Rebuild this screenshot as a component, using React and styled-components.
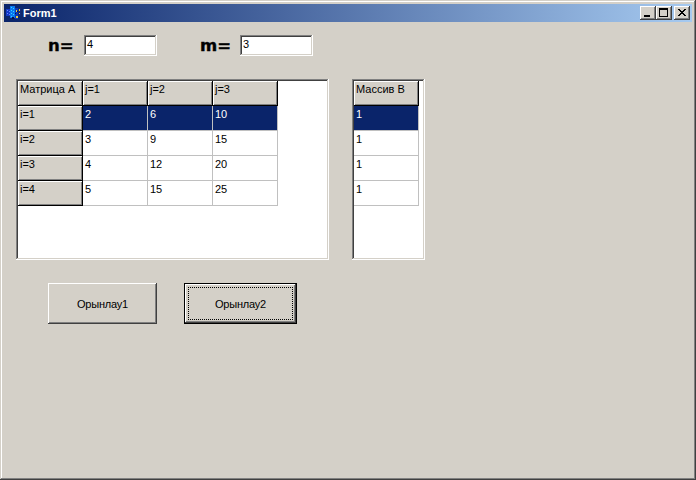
import React from "react";
import styled, { createGlobalStyle } from "styled-components";

const Global = createGlobalStyle`
  html, body { margin: 0; padding: 0; background: #d4d0c8; }
  * { box-sizing: border-box; }
`;

const Win = styled.div`
  width: 696px;
  height: 480px;
  padding: 4px;
  background: #d4d0c8;
  font-family: "Liberation Sans", Arial, sans-serif;
  font-size: 11px;
  color: #000;
  box-shadow: inset -1px -1px 0 #404040, inset 1px 1px 0 #d4d0c8,
    inset -2px -2px 0 #808080, inset 2px 2px 0 #fff;
  overflow: hidden;
`;

const TitleBar = styled.div`
  height: 18px;
  display: flex;
  align-items: center;
  padding: 0 2px 0 2px;
  background: linear-gradient(90deg, #0a246a, #a6caf0);
`;

const TitleIcon = styled.svg`
  width: 16px;
  height: 16px;
  flex: none;
  margin-right: 1px;
  shape-rendering: crispEdges;
`;

const TitleText = styled.span`
  flex: 1;
  color: #fff;
  font-weight: 700;
  font-size: 11px;
  font-family: "Liberation Sans", Arial, sans-serif;
`;

const CapBtn = styled.div`
  width: 16px;
  height: 14px;
  margin-left: ${(p) => p.$gap || 0}px;
  background: #d4d0c8;
  box-shadow: inset -1px -1px 0 #404040, inset 1px 1px 0 #fff,
    inset -2px -2px 0 #808080;
  display: flex;
  align-items: center;
  justify-content: center;
`;

const CapGlyph = styled.svg`
  width: 16px;
  height: 14px;
  shape-rendering: crispEdges;
`;

const Fields = styled.div`
  display: flex;
  align-items: center;
  height: 21px;
  margin-top: 13px;
  padding-left: 44px;
`;

const Label = styled.span`
  font-family: "DejaVu Sans", Verdana, sans-serif;
  font-weight: 700;
  font-size: 16.5px;
  line-height: 21px;
  -webkit-text-stroke: 0.4px #000;
  width: ${(p) => p.$w}px;
  margin-left: ${(p) => p.$ml || 0}px;
`;

const Edit = styled.div`
  width: 73px;
  height: 21px;
  padding: 3px 0 0 3px;
  background: #fff;
  line-height: 13px;
  box-shadow: inset -1px -1px 0 #fff, inset 1px 1px 0 #808080,
    inset -2px -2px 0 #d4d0c8, inset 2px 2px 0 #404040;
`;

const Grids = styled.div`
  display: flex;
  margin-top: 23px;
  margin-left: 12px;
  gap: 23px;
`;

const GridBox = styled.div`
  width: ${(p) => p.$w}px;
  height: 181px;
  padding: 2px;
  background: #fff;
  box-shadow: inset -1px -1px 0 #fff, inset 1px 1px 0 #808080,
    inset -2px -2px 0 #d4d0c8, inset 2px 2px 0 #404040;
`;

const Row = styled.div`
  display: flex;
  height: 25px;
`;

const Fixed = styled.div`
  width: 65px;
  height: 25px;
  padding: 2px 0 0 2px;
  line-height: 13px;
  background: #d4d0c8;
  white-space: nowrap;
  box-shadow: inset -1px -1px 0 #000, inset 1px 1px 0 #fff,
    inset -2px -2px 0 #808080;
`;

const Cell = styled.div`
  width: 65px;
  height: 25px;
  padding: 2px 0 0 2px;
  line-height: 13px;
  background: ${(p) => (p.$sel ? "#0a246a" : "#fff")};
  color: ${(p) => (p.$sel ? "#fff" : "#000")};
  border-right: 1px solid #c0c0c0;
  border-bottom: 1px solid #c0c0c0;
`;

const Buttons = styled.div`
  display: flex;
  margin-top: 23px;
  margin-left: 44px;
  gap: 27px;
`;

const Btn = styled.div`
  width: ${(p) => p.$w}px;
  height: 41px;
  background: #d4d0c8;
  display: flex;
  align-items: center;
  justify-content: center;
  letter-spacing: -0.2px;
  box-shadow: inset -1px -1px 0 #404040, inset 1px 1px 0 #fff,
    inset -2px -2px 0 #808080;
`;

const DefaultBtn = styled(Btn)`
  position: relative;
  box-shadow: inset 0 0 0 1px #000, inset -2px -2px 0 #404040,
    inset 2px 2px 0 #fff, inset -3px -3px 0 #808080;
  &::after {
    content: "";
    position: absolute;
    inset: 4px;
    border: 1px dotted #000;
  }
`;

const Logo = () => (
  <TitleIcon viewBox="0 0 16 16">
    <rect x="0" y="4" width="4" height="7" fill="#1238c8" />
    <rect x="4" y="1" width="5" height="12" fill="#0a78f0" />
    <rect x="9" y="3" width="3" height="11" fill="#0c3ab8" />
    <rect x="12" y="3" width="3" height="8" fill="#142a78" />
    <path d="M1 5h1v1H1zM1 8h1v1H1zM3 6h1v1H3zM3 9h1v1H3z" fill="#6a88ff" />
    <path d="M5 2h1v1H5zM7 3h1v1H7zM5 5h1v1H5zM7 6h1v1H7zM5 8h1v1H5zM7 9h1v1H7zM5 11h1v1H5z" fill="#38d8ff" />
    <path d="M10 5h1v2h-1zM13 4h1v2h-1zM10 11h2v2h-2zM13 8h1v1h-1z" fill="#e8d040" />
    <path d="M6 12h2v2H6zM9 8h1v1H9zM11 6h1v1h-1z" fill="#081048" />
  </TitleIcon>
);

const Min = () => (
  <CapGlyph viewBox="0 0 16 14">
    <rect x="4" y="9" width="6" height="2" fill="#000" />
  </CapGlyph>
);
const Max = () => (
  <CapGlyph viewBox="0 0 16 14">
    <path d="M3 2h9v9H3z M4 4v6h7V4z" fill="#000" fillRule="evenodd" />
  </CapGlyph>
);
const Close = () => (
  <CapGlyph viewBox="0 0 16 14">
    <path
      d="M4 3h2v1h1v1h2V4h1V3h2v1h-1v1h-1v1H9v1h1v1h1v1h1v1h-2V9H9V8H7v1H6v1H4V9h1V8h1V7h1V6H6V5H5V4H4z"
      fill="#000"
    />
  </CapGlyph>
);

const matrix = [
  ["i=1", "2", "6", "10"],
  ["i=2", "3", "9", "15"],
  ["i=3", "4", "12", "20"],
  ["i=4", "5", "15", "25"],
];

export default function App() {
  return (
    <Win>
      <Global />
      <TitleBar>
        <Logo />
        <TitleText>Form1</TitleText>
        <CapBtn><Min /></CapBtn>
        <CapBtn><Max /></CapBtn>
        <CapBtn $gap={2}><Close /></CapBtn>
      </TitleBar>
      <Fields>
        <Label $w={36}>n=</Label>
        <Edit>4</Edit>
        <Label $w={40} $ml={43}>m=</Label>
        <Edit>3</Edit>
      </Fields>
      <Grids>
        <GridBox $w={313}>
          <Row>
            <Fixed>Матрица А</Fixed>
            <Fixed>j=1</Fixed>
            <Fixed>j=2</Fixed>
            <Fixed>j=3</Fixed>
          </Row>
          {matrix.map((r, i) => (
            <Row key={r[0]}>
              <Fixed>{r[0]}</Fixed>
              {r.slice(1).map((v, j) => (
                <Cell key={j} $sel={i === 0}>{v}</Cell>
              ))}
            </Row>
          ))}
        </GridBox>
        <GridBox $w={73}>
          <Row><Fixed>Массив В</Fixed></Row>
          {[0, 1, 2, 3].map((i) => (
            <Row key={i}><Cell $sel={i === 0}>1</Cell></Row>
          ))}
        </GridBox>
      </Grids>
      <Buttons>
        <Btn $w={109}>Орынлау1</Btn>
        <DefaultBtn $w={113}>Орынлау2</DefaultBtn>
      </Buttons>
    </Win>
  );
}
